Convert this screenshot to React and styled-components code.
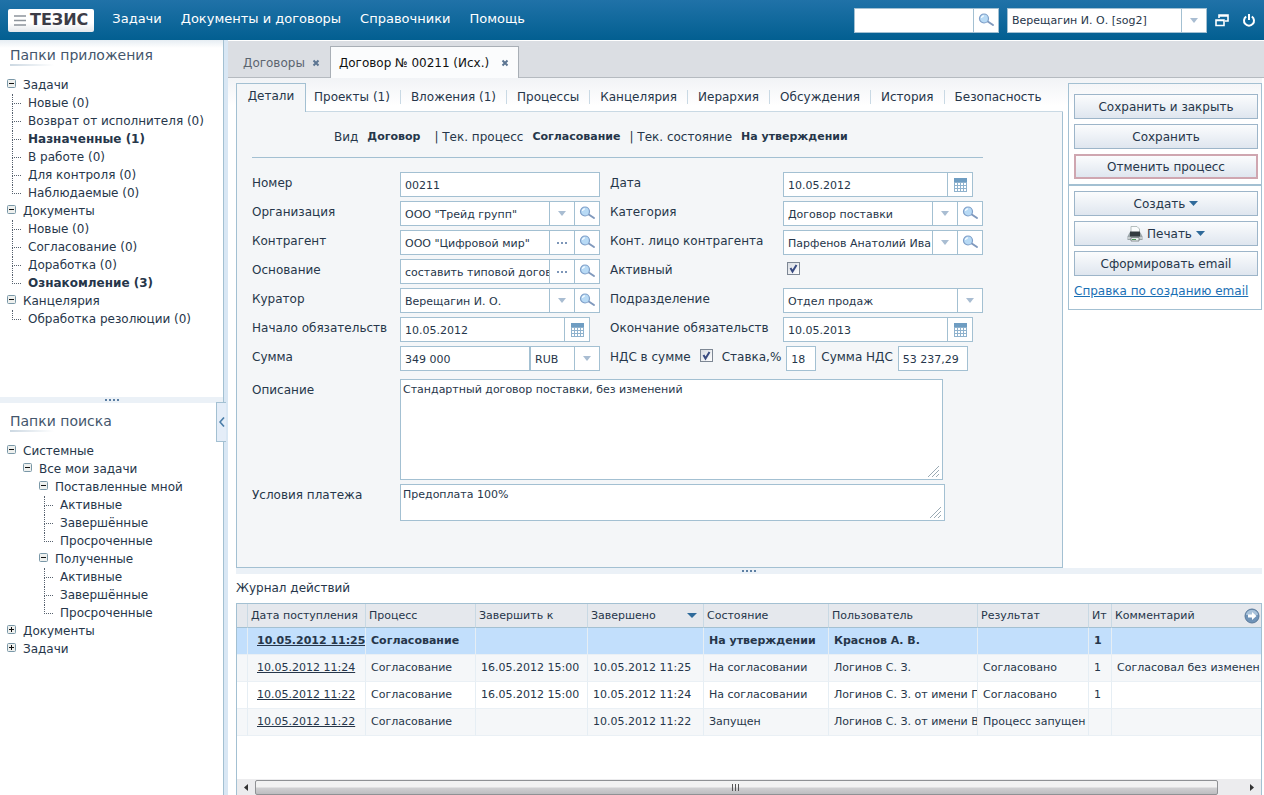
import React from "react";
import styled, { createGlobalStyle, css } from "styled-components";

const c = {
  text: "#26364a",
  line: "#a3c0d2",
  soft: "#c9d9e4",
  panel: "#f4f6f8",
  band: "#ebf1f7",
  accent: "#2f6a9a",
};

const GlobalStyle = createGlobalStyle`
  * { box-sizing: border-box; }
  body { margin: 0; background: #fff; color: ${c.text}; font: 12px/18px Verdana, "DejaVu Sans", sans-serif; }
  button, input, select, textarea { font: inherit; color: inherit; }
  ul { list-style: none; margin: 0; padding: 0; }
`;

const Page = styled.div`
  display: flex;
  flex-direction: column;
  min-height: 100vh;
`;

/* ---------- header ---------- */

const Header = styled.header`
  display: flex;
  align-items: center;
  height: 40px;
  padding: 0 8px;
  background: linear-gradient(#2072a8, #025f91);
`;

const Logo = styled.div`
  display: flex;
  align-items: center;
  gap: 4px;
  height: 23px;
  padding: 0 6px;
  margin-right: 18px;
  border-radius: 2px;
  background: linear-gradient(#fff 60%, #e4e8ec);
  color: #3c3c46;
  font-size: 16px;
  font-weight: bold;
`;

const Menu = styled.nav`
  display: flex;
  gap: 19px;
  flex: 1;
  padding-bottom: 2px;
  a { color: #fff; text-decoration: none; font-size: 13px; white-space: nowrap; }
`;

const HeaderTools = styled.div`
  display: flex;
  align-items: center;
  gap: 8px;
`;

const IconButton = styled.button`
  display: flex;
  padding: 0;
  border: 0;
  background: none;
  margin-left: ${(p) => (p.$gap ? "5px" : "0")};
`;

/* ---------- fields ---------- */

const FieldBox = styled.div`
  display: flex;
  width: ${(p) => p.$w}px;
  height: 25px;
  border: 1px solid ${c.line};
  background: #fff;
`;

const TextInput = styled.input`
  flex: 1;
  min-width: 0;
  height: 23px;
  padding: 2px 0 0 4px;
  border: 0;
  background: transparent;
  font-size: 11px;
`;

const FieldButton = styled.button`
  display: flex;
  flex: none;
  align-items: center;
  justify-content: center;
  width: 25px;
  padding: 0;
  border: 0;
  border-left: 1px solid ${c.line};
  background: #fff;
`;

const Select = styled.select`
  flex: 1;
  min-width: 0;
  appearance: none;
  padding: 2px 4px 0;
  border: 0;
  font-size: 11px;
  background: linear-gradient(${c.line}, ${c.line}) right 24px top / 1px 100% no-repeat,
    url("data:image/svg+xml,%3Csvg xmlns='http://www.w3.org/2000/svg' width='8' height='5'%3E%3Cpath d='M0 0h8L4 5z' fill='%23a9bdd2'/%3E%3C/svg%3E")
    right 8px center / 8px 5px no-repeat, #fff;
`;

const CurrencySlot = styled.span`
  display: flex;
  flex: 0 0 70px;
  border-left: 2px solid ${c.line};
`;

const Check = styled.input`
  appearance: none;
  width: 13px;
  height: 13px;
  margin: 0;
  border: 1px solid #7d8794;
  background: url("data:image/svg+xml,%3Csvg xmlns='http://www.w3.org/2000/svg' width='11' height='11'%3E%3Cpath d='M2.5 5l2 3.5L8.5 2' fill='none' stroke='%23384a80' stroke-width='2'/%3E%3C/svg%3E")
    center no-repeat, linear-gradient(135deg, #d8dce2, #fff);
`;

const Area = styled.textarea`
  display: block;
  width: ${(p) => p.$w}px;
  height: ${(p) => p.$h}px;
  padding: 1px 2px;
  border: 1px solid ${c.line};
  background: #fff;
  font-size: 11px;
  resize: both;
  &::-webkit-resizer {
    background: #fff url("data:image/svg+xml,%3Csvg xmlns='http://www.w3.org/2000/svg' width='15' height='15'%3E%3Cpath d='M1 13L12 2M5 13l7-7M9 13l3-3' fill='none' stroke='%239aaab4'/%3E%3C/svg%3E") center no-repeat;
  }
`;

/* ---------- sidebar ---------- */

const Body = styled.div`
  display: flex;
  flex: 1;
`;

const Sidebar = styled.aside`
  position: relative;
  display: flex;
  flex-direction: column;
  flex: 0 0 228px;
  border-right: 4px solid #d9e7f4;
  background: linear-gradient(#e6edf3, #fff 8px);
  &::after {
    content: "";
    position: absolute;
    inset: 0 0 0 auto;
    border-right: 1px solid ${c.line};
  }
`;

const FolderPanel = styled.section`
  padding: ${(p) => (p.$tall ? "4px" : "7px")} 7px 0;
  min-height: ${(p) => (p.$tall ? "357px" : "0")};
`;

const FolderTitle = styled.h2`
  width: max-content;
  margin: 0 0 10px 3px;
  font-size: 14px;
  line-height: 22px;
  font-weight: normal;
  color: #44566c;
  background: linear-gradient(90deg, #ccd8e2, #fff) left bottom / 44px 2px no-repeat;
`;

const Splitter = styled.div`
  display: flex;
  align-items: center;
  justify-content: center;
  flex: none;
  height: 6px;
  background: ${c.band};
`;

const Collapse = styled.button`
  position: absolute;
  z-index: 1;
  top: 362px;
  right: -2px;
  width: 10px;
  height: 40px;
  display: flex;
  align-items: center;
  justify-content: center;
  padding: 0;
  border: 1px solid ${c.line};
  border-right: 0;
  background: #e4edf8;
`;

const Children = styled.ul`
  padding-left: ${(p) => (p.$leaf ? "5px" : "16px")};
`;

const NodeRow = styled.div`
  display: flex;
  height: 18px;
  white-space: nowrap;
  font-weight: ${(p) => (p.$bold ? "bold" : "normal")};
`;

const Toggle = styled.button`
  display: block;
  width: 9px;
  height: 9px;
  margin: 3px 7px 0 0;
  padding: 0;
  border: 0;
  background: none;
  svg { display: block; }
`;

const Branch = styled.span`
  width: 9px;
  margin-right: 7px;
  &::before {
    content: "";
    display: block;
    height: 9px;
    border: dotted #56616e;
    border-width: 0 0 1px 1px;
  }
  &::after {
    content: "";
    display: ${(p) => (p.$last ? "none" : "block")};
    height: 9px;
    border-left: 1px dotted #56616e;
  }
`;

/* ---------- main area ---------- */

const Main = styled.main`
  display: flex;
  flex-direction: column;
  flex: 1;
  min-width: 0;
  padding-right: 2px;
`;

const TabStrip = styled.div`
  display: flex;
  align-items: flex-end;
  height: 38px;
  margin-right: -2px;
  background: #dbdee3;
  border-top: 1px solid #fff;
  box-shadow: inset 0 -1px #b5bac0;
`;

const DocTab = styled.div`
  display: flex;
  align-items: center;
  gap: ${(p) => (p.$active ? "12px" : "7px")};
  height: ${(p) => (p.$active ? "32px" : "31px")};
  padding: ${(p) => (p.$active ? "0 9px 0 8px" : "0 10px 0 15px")};
  border: ${(p) => (p.$active ? "1px solid #a9afb6" : "0")};
  border-bottom: 0;
  background: ${(p) => (p.$active ? "#fbfcfd" : "none")};
  color: ${(p) => (p.$active ? "#111" : "#5c6570")};
  white-space: nowrap;
`;

const Workspace = styled.div`
  display: flex;
  gap: 5px;
  padding: 5px 0 0 8px;
  background: linear-gradient(#f1f3f6, #fff 28px);
`;

const Card = styled.section`
  display: flex;
  flex-direction: column;
  flex: 1;
  min-width: 0;
  min-height: 485px;
`;

const CardTabs = styled.div`
  display: flex;
  flex: none;
  height: 29px;
`;

const CardTab = styled.button`
  padding: 0;
  border: 0;
  background: none;
  white-space: nowrap;
  ${(p) =>
    p.$active
      ? css`
          width: 70px;
          padding-bottom: 4px;
          border: 1px solid ${c.line};
          border-bottom: 0;
          background: ${c.panel};
        `
      : css`
          border-bottom: 1px solid ${c.soft};
          span { display: block; padding: 0 10px; line-height: 14px; border-right: 1px solid ${c.soft}; }
          &:nth-of-type(2) span { padding-left: 8px; }
          &:last-of-type span { border: 0; }
        `}
`;

const TabFill = styled.div`
  flex: 1;
  border-bottom: 1px solid ${c.soft};
`;

const CardBody = styled.div`
  flex: 1;
  padding: 15px;
  border: 1px solid ${c.line};
  border-top: 0;
  background: ${c.panel};
`;

const Info = styled.p`
  display: flex;
  gap: 9px;
  width: 731px;
  margin: 0 0 14px;
  padding: 1px 0 11px 82px;
  border-bottom: 1px solid ${c.line};
  b { font-size: 11px; }
  b:first-of-type { margin-right: 5px; }
`;

const FormGrid = styled.div`
  display: grid;
  grid-template-columns: 148px 210px 173px 200px;
  grid-auto-rows: 25px;
  row-gap: 4px;
`;

const Label = styled.label`
  line-height: 22px;
  white-space: nowrap;
`;

const TaxRow = styled.div`
  grid-column: 3 / 5;
  display: flex;
  gap: 5px;
`;

const CheckSlot = styled.span`
  padding: 3px 4px;
  line-height: 0;
`;

const AreaRow = styled.div`
  display: grid;
  grid-template-columns: 148px 1fr;
  margin-top: ${(p) => p.$gap}px;
`;

const Actions = styled.aside`
  flex: 0 0 194px;
`;

const ActionGroup = styled.div`
  display: flex;
  flex-direction: column;
  gap: 5px;
  padding: ${(p) => (p.$first ? "10px 3px 5px 5px" : "5px 3px 8px 5px")};
  margin-top: ${(p) => (p.$first ? "0" : "-1px")};
  border: 1px solid ${c.line};
  border-top-width: ${(p) => (p.$first ? "1px" : "2px")};
  a { color: #1a6fb5; line-height: 20px; white-space: nowrap; }
`;

const ActionButton = styled.button`
  display: flex;
  align-items: center;
  justify-content: center;
  gap: 4px;
  height: 25px;
  padding: 0;
  border: ${(p) => (p.$danger ? "2px solid #cfa6b0" : "1px solid #9db5c9")};
  background: linear-gradient(#fbfcfd, #dfe6ef);
`;

/* ---------- journal ---------- */

const Journal = styled.section`
  display: flex;
  flex-direction: column;
  flex: 1;
  padding-left: 8px;
  h3 { margin: 0; font-size: 12px; font-weight: normal; line-height: 29px; }
`;

const TableFrame = styled.div`
  display: flex;
  flex-direction: column;
  justify-content: space-between;
  flex: 1;
  border: 1px solid ${c.line};
  border-bottom: 0;
`;

const Grid = styled.table`
  width: 100%;
  table-layout: fixed;
  border-collapse: separate;
  border-spacing: 0;
  font-size: 11px;
  th, td { overflow: hidden; white-space: nowrap; padding: 0; text-align: left; }
  th {
    height: 24px;
    padding-left: 3px;
    font-weight: normal;
    background: #e5e8ed;
    border-right: 1px solid ${c.soft};
    border-bottom: 1px solid ${c.line};
  }
  td { height: 27px; padding-left: 5px; border-right: 1px solid #e6eef4; border-bottom: 1px solid #eaf0f5; }
  th:last-child, td:last-child { border-right: 0; }
  td:nth-child(2) { padding-left: 9px; }
  a { color: inherit; }
`;

const Row = styled.tr`
  background: ${(p) => (p.$selected ? "#c2dffc" : p.$alt ? "#f5f7f9" : "#fff")};
  font-weight: ${(p) => (p.$selected ? "bold" : "normal")};
`;

const HeadCell = styled.div`
  display: flex;
  align-items: center;
  justify-content: space-between;
  padding-right: ${(p) => (p.$flush ? "1px" : "6px")};
  overflow: hidden;
`;

const ScrollTrack = styled.div`
  display: flex;
  align-items: center;
  height: 16px;
  background: #ececee;
`;

const ScrollArrow = styled.button`
  display: flex;
  align-items: center;
  justify-content: center;
  width: 18px;
  height: 16px;
  padding: 0;
  border: 0;
  background: none;
`;

const ScrollThumb = styled.div`
  display: flex;
  align-items: center;
  justify-content: center;
  flex: 0 0 94%;
  height: 15px;
  margin-right: auto;
  border: 1px solid #8f9194;
  border-radius: 2px;
  background: linear-gradient(#f2f2f2 45%, #cfcfd1 55%, #bdbdc0);
`;

/* ---------- icons ---------- */

const Magnifier = () => (
  <svg width="17" height="15" viewBox="0 0 17 15" aria-hidden="true">
    <path d="M9 8l6 4" stroke="#8099bd" strokeWidth="2" strokeLinecap="round" />
    <circle cx="6" cy="5.500" r="4.500" fill="#b8daf5" stroke="#7f9fc8" strokeWidth="1.200" />
    <path d="M3.500 5a2.500 2.500 0 0 1 2.500-2.200" fill="none" stroke="#f4fbff" strokeWidth="1.200" />
  </svg>
);

const Calendar = () => (
  <svg width="13" height="14" viewBox="0 0 13 14" aria-hidden="true">
    <path d="M0 0h13v14H0z" fill="#8fb2cd" />
    <path d="M0 0h13v4H0z" fill="#6f9dc2" />
    <path d="M1 5h2v2H1zM4 5h2v2H4zM7 5h2v2H7zM10 5h2v2h-2zM1 8h2v2H1zM4 8h2v2H4zM7 8h2v2H7zM10 8h2v2h-2zM1 11h2v2H1zM4 11h2v2H4zM7 11h2v2H7zM10 11h2v2h-2z" fill="#fff" />
  </svg>
);

const Down = ({ fill = "#a9bdd2", w = 8 }) => (
  <svg width={w} height="5" viewBox="0 0 8 5" preserveAspectRatio="none" aria-hidden="true">
    <path d="M0 0h8L4 5z" fill={fill} />
  </svg>
);

const Dots = ({ n = 3, fill = "#7d96b8" }) => (
  <svg width={n * 4} height="2" aria-hidden="true">
    {Array.from({ length: n }, (_, i) => (
      <rect key={i} x={i * 4 + 1} width="2" height="2" fill={fill} />
    ))}
  </svg>
);

const Cross = () => (
  <svg width="8" height="8" viewBox="0 0 8 8" aria-hidden="true">
    <path d="M1.500 1.500l5 5M6.500 1.500l-5 5" stroke="#5c7592" strokeWidth="2" />
  </svg>
);

const Box = ({ open }) => (
  <svg width="9" height="9" viewBox="0 0 9 9" aria-hidden="true">
    <rect x=".5" y=".5" width="8" height="8" rx="1" fill="#eef0ee" stroke="#7a98a8" />
    <path d={open ? "M2 4.500h5" : "M2 4.500h5M4.500 2v5"} stroke="#111" />
  </svg>
);

const Printer = () => (
  <svg width="16" height="16" viewBox="0 0 16 16" aria-hidden="true">
    <path d="M4 .5h6l2.500 2.500V7H4z" fill="#fafcfc" stroke="#a5b0b0" strokeWidth=".8" />
    <path d="M2.500 6.500h11l2 4v3.500H.5v-3.500z" fill="#9aa4a8" />
    <path d="M3 5.500h10v5H3z" fill="#343c40" />
    <path d="M1 11h14v2H1z" fill="#c6ccce" />
    <path d="M4 11.500h8v3.500H4z" fill="#e9eeee" stroke="#727a7c" strokeWidth=".8" />
    <path d="M5 13.500h4" stroke="#4c9a58" />
  </svg>
);

const Windows = () => (
  <svg width="14" height="13" viewBox="0 0 14 13" aria-hidden="true">
    <path d="M4 4V1h9v6h-3M4 2h9" fill="none" stroke="#fff" strokeWidth="1.600" />
    <path d="M1 6h8v5.500H1zM1 6.500h8" fill="none" stroke="#fff" strokeWidth="1.600" />
  </svg>
);

const Power = () => (
  <svg width="14" height="14" viewBox="0 0 14 14" aria-hidden="true">
    <path d="M4.200 3.500a5 5 0 1 0 5.600 0M7 1v6" fill="none" stroke="#fff" strokeWidth="2" />
  </svg>
);

const Go = () => (
  <svg width="16" height="16" viewBox="0 0 16 16" aria-hidden="true">
    <circle cx="8" cy="8" r="7" fill="#6f93b8" stroke="#5b7a9b" />
    <path d="M2 7a6 5 0 0 1 12 0z" fill="#a9c2da" />
    <path d="M4 6.500h4V4l4.500 4L8 12V9.500H4z" fill="#fff" />
  </svg>
);

/* ---------- data ---------- */

const appTree = [
  { t: "Задачи", kids: ["Новые (0)", "Возврат от исполнителя (0)", "*Назначенные (1)", "В работе (0)", "Для контроля (0)", "Наблюдаемые (0)"] },
  { t: "Документы", kids: ["Новые (0)", "Согласование (0)", "Доработка (0)", "*Ознакомление (3)"] },
  { t: "Канцелярия", kids: ["Обработка резолюции (0)"] },
];

const states = ["Активные", "Завершённые", "Просроченные"];
const searchTree = [
  { t: "Системные", kids: [{ t: "Все мои задачи", kids: [{ t: "Поставленные мной", kids: states }, { t: "Полученные", kids: states }] }] },
  { t: "Документы" },
  { t: "Задачи" },
];

const columns = [
  ["", 11],
  ["Дата поступления", 118],
  ["Процесс", 110],
  ["Завершить к", 112],
  ["Завершено", 116],
  ["Состояние", 125],
  ["Пользователь", 149],
  ["Результат", 111],
  ["Ит", 23],
  ["Комментарий"],
];

const rows = [
  ["10.05.2012 11:25", "Согласование", "", "", "На утверждении", "Краснов А. В.", "", "1", ""],
  ["10.05.2012 11:24", "Согласование", "16.05.2012 15:00", "10.05.2012 11:25", "На согласовании", "Логинов С. З.", "Согласовано", "1", "Согласовал без изменен"],
  ["10.05.2012 11:22", "Согласование", "16.05.2012 15:00", "10.05.2012 11:24", "На согласовании", "Логинов С. З. от имени П", "Согласовано", "1", ""],
  ["10.05.2012 11:22", "Согласование", "", "10.05.2012 11:22", "Запущен", "Логинов С. З. от имени В", "Процесс запущен", "", ""],
];

const buttonIcons = {
  down: ["Открыть список", <Down />],
  dots: ["Выбрать", <Dots />],
  find: ["Найти", <Magnifier />],
  date: ["Календарь", <Calendar />],
};

/* ---------- composite parts ---------- */

function Field({ id, value, w, buttons = [], label }) {
  return (
    <FieldBox $w={w}>
      <TextInput id={id} defaultValue={value} aria-label={label} />
      {buttons.map((b) => (
        <FieldButton key={b} type="button" aria-label={buttonIcons[b][0]}>
          {buttonIcons[b][1]}
        </FieldButton>
      ))}
    </FieldBox>
  );
}

function Tree({ items }) {
  return items.map((it, i) => {
    if (typeof it === "string") {
      const bold = it[0] === "*";
      return (
        <li key={i}>
          <NodeRow $bold={bold}>
            <Branch $last={i === items.length - 1} />
            {bold ? it.slice(1) : it}
          </NodeRow>
        </li>
      );
    }
    return (
      <li key={i}>
        <NodeRow>
          <Toggle type="button" aria-label={it.kids ? "Свернуть" : "Развернуть"}>
            <Box open={!!it.kids} />
          </Toggle>
          {it.t}
        </NodeRow>
        {it.kids && (
          <Children $leaf={typeof it.kids[0] === "string"}>
            <Tree items={it.kids} />
          </Children>
        )}
      </li>
    );
  });
}

function Labelled({ id, label, ...rest }) {
  return (
    <>
      <Label htmlFor={id}>{label}</Label>
      <Field id={id} {...rest} />
    </>
  );
}

export default function App() {
  return (
    <Page>
      <GlobalStyle />
      <Header>
        <Logo>
          <svg width="12" height="11" viewBox="0 0 12 11" aria-hidden="true">
            <path d="M0 1h12M0 5.500h12M0 10h12" stroke="#8d949c" strokeWidth="1.600" />
          </svg>
          ТЕЗИС
        </Logo>
        <Menu>
          <a href="#tasks">Задачи</a>
          <a href="#docs">Документы и договоры</a>
          <a href="#refs">Справочники</a>
          <a href="#help">Помощь</a>
        </Menu>
        <HeaderTools>
          <Field w={145} buttons={["find"]} label="Поиск" />
          <FieldBox $w={200}>
            <Select aria-label="Пользователь">
              <option>Верещагин И. О. [sog2]</option>
            </Select>
          </FieldBox>
          <IconButton type="button" aria-label="Новое окно"><Windows /></IconButton>
          <IconButton type="button" aria-label="Выход" $gap><Power /></IconButton>
        </HeaderTools>
      </Header>
      <Body>
        <Sidebar>
          <FolderPanel $tall>
            <FolderTitle>Папки приложения</FolderTitle>
            <ul><Tree items={appTree} /></ul>
          </FolderPanel>
          <Splitter><Dots n={4} fill="#5c7fa3" /></Splitter>
          <FolderPanel>
            <FolderTitle>Папки поиска</FolderTitle>
            <ul><Tree items={searchTree} /></ul>
          </FolderPanel>
          <Collapse type="button" aria-label="Свернуть панель">
            <svg width="6" height="10" viewBox="0 0 6 10"><path d="M5 .5L1 5l4 4.500" fill="none" stroke="#4a7da8" strokeWidth="1.600" /></svg>
          </Collapse>
        </Sidebar>
        <Main>
          <TabStrip>
            <DocTab>Договоры <Cross /></DocTab>
            <DocTab $active>Договор № 00211 (Исх.) <Cross /></DocTab>
          </TabStrip>
          <Workspace>
            <Card>
              <CardTabs>
                <CardTab type="button" $active>Детали</CardTab>
                {["Проекты (1)", "Вложения (1)", "Процессы", "Канцелярия", "Иерархия", "Обсуждения", "История", "Безопасность"].map((t) => (
                  <CardTab key={t} type="button"><span>{t}</span></CardTab>
                ))}
                <TabFill />
              </CardTabs>
              <CardBody>
                <Info>
                  <span>Вид</span><b>Договор</b>
                  <span>| Тек. процесс</span><b>Согласование</b>
                  <span>| Тек. состояние</span><b>На утверждении</b>
                </Info>
                <FormGrid>
                  <Labelled id="num" label="Номер" value="00211" w={200} />
                  <Labelled id="date" label="Дата" value="10.05.2012" w={190} buttons={["date"]} />
                  <Labelled id="org" label="Организация" value={'ООО "Трейд групп"'} w={200} buttons={["down", "find"]} />
                  <Labelled id="cat" label="Категория" value="Договор поставки" w={200} buttons={["down", "find"]} />
                  <Labelled id="agent" label="Контрагент" value={'ООО "Цифровой мир"'} w={200} buttons={["dots", "find"]} />
                  <Labelled id="person" label="Конт. лицо контрагента" value="Парфенов Анатолий Ива" w={200} buttons={["down", "find"]} />
                  <Labelled id="base" label="Основание" value="составить типовой догов" w={200} buttons={["dots", "find"]} />
                  <Label htmlFor="active">Активный</Label>
                  <CheckSlot><Check id="active" type="checkbox" defaultChecked /></CheckSlot>
                  <Labelled id="curator" label="Куратор" value="Верещагин И. О." w={200} buttons={["down", "find"]} />
                  <Label htmlFor="dept">Подразделение</Label>
                  <FieldBox $w={200}>
                    <Select id="dept"><option>Отдел продаж</option></Select>
                  </FieldBox>
                  <Labelled id="start" label="Начало обязательств" value="10.05.2012" w={190} buttons={["date"]} />
                  <Labelled id="end" label="Окончание обязательств" value="10.05.2013" w={190} buttons={["date"]} />
                  <Label htmlFor="sum">Сумма</Label>
                  <FieldBox $w={200}>
                    <TextInput id="sum" defaultValue="349 000" />
                    <CurrencySlot>
                      <Select aria-label="Валюта"><option>RUB</option></Select>
                    </CurrencySlot>
                  </FieldBox>
                  <TaxRow>
                    <Label htmlFor="vat">НДС в сумме</Label>
                    <CheckSlot><Check id="vat" type="checkbox" defaultChecked /></CheckSlot>
                    <Label htmlFor="rate">Ставка,%</Label>
                    <Field id="rate" value="18" w={30} />
                    <Label htmlFor="vatsum">Сумма НДС</Label>
                    <Field id="vatsum" value="53 237,29" w={70} />
                  </TaxRow>
                </FormGrid>
                <AreaRow $gap={8}>
                  <Label htmlFor="desc">Описание</Label>
                  <Area id="desc" $w={543} $h={101} defaultValue="Стандартный договор поставки, без изменений" />
                </AreaRow>
                <AreaRow $gap={4}>
                  <Label htmlFor="terms">Условия платежа</Label>
                  <Area id="terms" $w={545} $h={37} defaultValue="Предоплата 100%" />
                </AreaRow>
              </CardBody>
            </Card>
            <Actions>
              <ActionGroup $first>
                <ActionButton type="button">Сохранить и закрыть</ActionButton>
                <ActionButton type="button">Сохранить</ActionButton>
                <ActionButton type="button" $danger>Отменить процесс</ActionButton>
              </ActionGroup>
              <ActionGroup>
                <ActionButton type="button">Создать <Down fill={c.accent} w={9} /></ActionButton>
                <ActionButton type="button"><Printer />Печать <Down fill={c.accent} w={9} /></ActionButton>
                <ActionButton type="button">Сформировать email</ActionButton>
                <a href="#email-help">Справка по созданию email</a>
              </ActionGroup>
            </Actions>
          </Workspace>
          <Journal>
            <Splitter><Dots n={4} fill="#5c7fa3" /></Splitter>
            <h3>Журнал действий</h3>
            <TableFrame>
              <Grid>
                <colgroup>
                  {columns.map(([t, w]) => <col key={t} width={w} />)}
                </colgroup>
                <thead>
                  <tr>
                    {columns.map(([t]) => (
                      <th key={t}>
                        <HeadCell $flush={t === "Комментарий" || t === "Ит"}>
                          {t}
                          {t === "Завершено" && <Down fill={c.accent} w={10} />}
                          {t === "Комментарий" && <Go />}
                        </HeadCell>
                      </th>
                    ))}
                  </tr>
                </thead>
                <tbody>
                  {rows.map((r, i) => (
                    <Row key={i} $selected={i === 0} $alt={i % 2 === 1}>
                      <td />
                      {r.map((v, j) => <td key={j}>{j === 0 ? <a href="#entry">{v}</a> : v}</td>)}
                    </Row>
                  ))}
                </tbody>
              </Grid>
              <ScrollTrack>
                <ScrollArrow type="button" aria-label="Влево">
                  <svg width="4" height="7"><path d="M4 0v7L0 3.500z" fill="#333" /></svg>
                </ScrollArrow>
                <ScrollThumb>
                  <svg width="8" height="7"><path d="M.5 0v7M3.500 0v7M6.500 0v7" stroke="#555" /></svg>
                </ScrollThumb>
                <ScrollArrow type="button" aria-label="Вправо">
                  <svg width="4" height="7"><path d="M0 0v7l4-3.500z" fill="#333" /></svg>
                </ScrollArrow>
              </ScrollTrack>
            </TableFrame>
          </Journal>
        </Main>
      </Body>
    </Page>
  );
}
